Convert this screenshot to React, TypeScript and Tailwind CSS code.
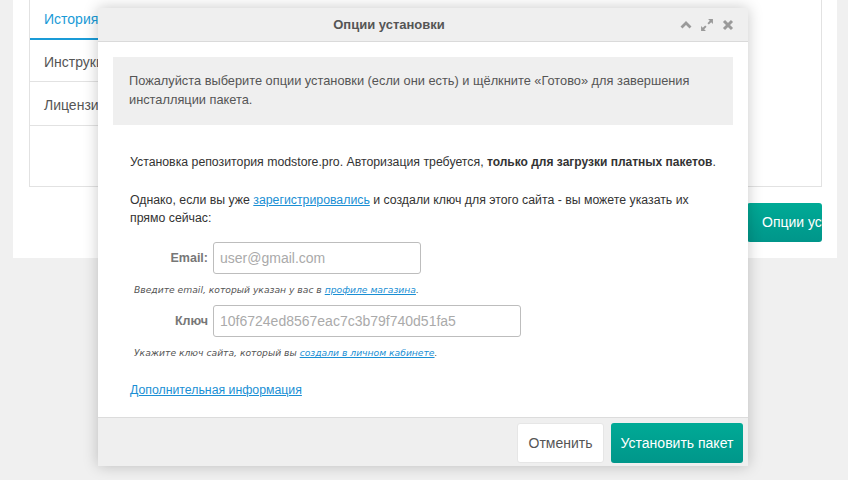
import React from 'react'

const font = { fontFamily: '"Liberation Sans", Arial, sans-serif' }
const hintFont = { fontFamily: '"DejaVu Sans", Verdana, sans-serif' }

function ToolIcons() {
  return (
    <div className="flex items-center gap-[8px] text-[#9a9a9a]">
      <svg width="12" height="10" viewBox="0 0 12 10" fill="none" stroke="currentColor" strokeWidth={2.8}>
        <path d="M1.5 7.5 6 3l4.5 4.5" />
      </svg>
      <svg width="14" height="14" viewBox="0 0 13 13" fill="currentColor">
        <path d="M7.5 1h4.5v4.5l-1.6-1.6-2.2 2.2-1.3-1.3 2.2-2.2z" />
        <path d="M5.5 12H1V7.5l1.6 1.6 2.2-2.2 1.3 1.3-2.2 2.2z" />
      </svg>
      <svg width="12" height="12" viewBox="0 0 12 12" fill="none" stroke="currentColor" strokeWidth={3}>
        <path d="M2 2l8 8M10 2l-8 8" />
      </svg>
    </div>
  )
}

function Background() {
  return (
    <div className="ml-[13px] mr-[11px] bg-white pb-[16px] pl-[16px] pr-[15px]">
      <div className="flex h-[187px] border-x border-b border-[#e2e2e2]">
        <div className="w-[160px] text-[14px] text-[#555]">
          <div className="h-[40px] border-b-2 border-[#1a9bd7] pl-[14px] pt-[9px] text-[#1a9bd7]">История</div>
          <div className="h-[42px] border-b border-[#e2e2e2] pl-[14px] pt-[12px]">Инструкция</div>
          <div className="h-[44px] border-b border-[#e2e2e2] pl-[14px] pt-[13px]">Лицензия</div>
        </div>
        <div className="flex-1" />
      </div>
      <div className="mt-[16px] flex justify-end">
        <button className="h-[39px] w-[75px] overflow-hidden whitespace-nowrap rounded-[3px] bg-gradient-to-b from-[#00aa96] to-[#00968a] pl-[15px] text-left text-[14px] text-white">
          Опции установки
        </button>
      </div>
    </div>
  )
}

function Modal() {
  return (
    <div className="absolute left-[98px] top-[8px] flex h-[458px] w-[650px] flex-col bg-white shadow-[0_0_14px_rgba(0,0,0,0.22)]">
      <div className="flex h-[34px] items-center border-b border-[#dadada] bg-[#efefef] pr-[14px]">
        <div className="flex-1 text-center text-[13px] font-bold text-[#555]">Опции установки</div>
        <ToolIcons />
      </div>
      <div className="flex-1 px-[15px] pt-[15px]">
        <div className="h-[68px] bg-[#efefef] px-[16px] pt-[14px] text-[12.8px] leading-[19px] text-[#555]">
          Пожалуйста выберите опции установки (если они есть) и щёлкните «Готово» для завершения инсталляции пакета.
        </div>
        <div className="pl-[17px] text-[12.3px] leading-[18px] text-[#333]">
          <p className="mt-[28px] whitespace-nowrap">
            Установка репозитория modstore.pro. Авторизация требуется, <b className="text-[12px]">только для загрузки платных пакетов</b>.
          </p>
          <p className="mt-[20px] pr-[20px]">
            Однако, если вы уже <a className="text-[#1a8fd4] underline">зарегистрировались</a> и создали ключ для этого сайта - вы можете указать их прямо сейчас:
          </p>
          <div className="mt-[15px] flex items-center gap-[5px]">
            <div className="w-[78px] text-right text-[12.5px] font-bold text-[#777]">Email:</div>
            <input
              className="h-[32px] w-[208px] rounded-[3px] border border-[#bdbdbd] px-[6px] text-[14px] text-[#aaa] outline-none placeholder:text-[#aaa]"
              style={font}
              placeholder="user@gmail.com"
            />
          </div>
          <p className="ml-[4px] mt-[10px] text-[9.2px] italic leading-[12px] text-[#555]" style={hintFont}>
            Введите email, который указан у вас в <a className="text-[#1a8fd4] underline">профиле магазина</a>.
          </p>
          <div className="mt-[9px] flex items-center gap-[5px]">
            <div className="w-[78px] text-right text-[12.5px] font-bold text-[#777]">Ключ</div>
            <input
              className="h-[32px] w-[308px] rounded-[3px] border border-[#bdbdbd] px-[6px] text-[14px] text-[#aaa] outline-none"
              style={font}
              defaultValue="10f6724ed8567eac7c3b79f740d51fa5"
            />
          </div>
          <p className="ml-[4px] mt-[10px] text-[9.2px] italic leading-[12px] text-[#555]" style={hintFont}>
            Укажите ключ сайта, который вы <a className="text-[#1a8fd4] underline">создали в личном кабинете</a>.
          </p>
          <a className="mt-[22px] block w-fit text-[12.3px] text-[#1a8fd4] underline">Дополнительная информация</a>
        </div>
      </div>
      <div className="flex h-[49px] justify-end gap-[7px] border-t border-[#dcdcdc] bg-[#efefef] pr-[5px] pt-[5px]">
        <button className="h-[40px] w-[87px] rounded-[3px] border border-[#e6e6e6] bg-white text-[14px] text-[#555]">Отменить</button>
        <button className="h-[40px] w-[132px] rounded-[3px] bg-gradient-to-b from-[#00aa96] to-[#00968a] text-[14px] text-white">
          Установить пакет
        </button>
      </div>
    </div>
  )
}

export default function App() {
  return (
    <div className="relative h-[480px] w-[848px] overflow-hidden bg-[#f0f0f0]" style={font}>
      <Background />
      <Modal />
    </div>
  )
}
